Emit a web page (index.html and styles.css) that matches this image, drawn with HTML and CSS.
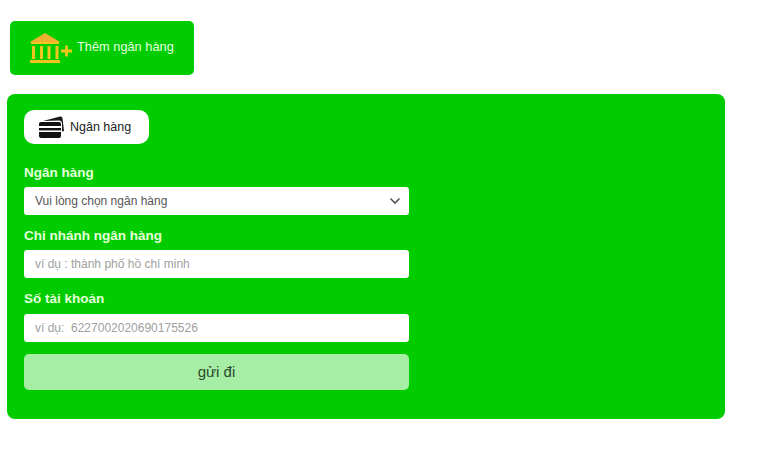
FILE: index.html
```html
<!DOCTYPE html>
<html lang="vi">
<head>
  <meta charset="UTF-8">
  <title>Thêm ngân hàng</title>
  <link rel="stylesheet" href="styles.css">
</head>
<body>
  <div class="add-wrap">
    <a class="add-bank" href="#">
      <svg class="bank-icon" width="43" height="31" viewBox="0 0 43 31">
        <path d="M1 9 L16 0 L31 9 Z" fill="#f0b030"/>
        <rect x="2" y="9" width="28" height="2" fill="#f2c51e"/>
        <rect x="3" y="13" width="3" height="13" fill="#f2c51e"/>
        <rect x="11" y="13" width="3" height="13" fill="#f2c51e"/>
        <rect x="18.500" y="13" width="3" height="13" fill="#f2c51e"/>
        <rect x="26.500" y="13" width="3" height="13" fill="#f2c51e"/>
        <rect x="1" y="27" width="30" height="3" fill="#f2c51e"/>
        <path d="M32 18 H43 M37.500 12.500 V23.500" stroke="#f2c51e" stroke-width="2.800" fill="none"/>
      </svg>
      <span>Thêm ngân hàng</span>
    </a>
  </div>

  <div class="panel">
    <div class="tab">
      <svg class="card-icon" width="26" height="23" viewBox="0 0 26 23">
        <path d="M4 5 L21 0.500 Q23 0 23.500 2 L25 15 L23 15.500 V8 Q23 4.500 20 4.500 Z" fill="#1a1a1a"/>
        <path d="M2 6 H20 Q22 6 22 8 V10 H0 V8 Q0 6 2 6 Z" fill="#111"/>
        <rect x="0" y="12" width="22" height="2.400" fill="#111"/>
        <path d="M0 16 H22 V20 Q22 22 20 22 H2 Q0 22 0 20 Z" fill="#111"/>
      </svg>
      <span>Ngân hàng</span>
    </div>

    <form class="bank-form">
      <label class="field-label">Ngân hàng</label>
      <div class="select-box">
        <span>Vui lòng chọn ngân hàng</span>
        <svg width="12" height="8" viewBox="0 0 12 8"><path d="M1.500 1.500 L6 6 L10.500 1.500" stroke="#555" stroke-width="1.600" fill="none"/></svg>
      </div>

      <label class="field-label">Chi nhánh ngân hàng</label>
      <input class="text-input" type="text" placeholder="ví dụ : thành phố hồ chí minh">

      <label class="field-label field-label-tall">Số tài khoản</label>
      <input class="text-input" type="text" placeholder="ví dụ:  6227002020690175526">

      <button class="submit" type="button">gửi đi</button>
    </form>
  </div>
</body>
</html>
```

FILE: styles.css
```css
body {
  margin: 0;
  background-color: #fff;
  font-family: "Liberation Sans", Arial, sans-serif;
  color: #222;
}
.add-wrap {
  padding: 21px 0 19px 10px;
}
.add-bank {
  display: flex;
  align-items: center;
  gap: 5px;
  width: 184px;
  height: 54px;
  box-sizing: border-box;
  padding-left: 19px;
  background-color: #00cc00;
  border-radius: 5px;
  color: #e6ffe0;
  font-size: 12.8px;
  text-decoration: none;
}
.add-bank span {
  margin-bottom: 3px;
}
.panel {
  width: 718px;
  height: 325px;
  box-sizing: border-box;
  margin-left: 7px;
  padding: 16px 17px;
  background-color: #00cc00;
  border-radius: 8px;
}
.tab {
  display: flex;
  align-items: center;
  gap: 5px;
  width: 125px;
  height: 34px;
  box-sizing: border-box;
  padding-left: 15px;
  background-color: #fff;
  border-radius: 10px;
  font-size: 12.5px;
}
.bank-form {
  width: 385px;
  margin-top: 20px;
}
.field-label {
  display: block;
  height: 23px;
  line-height: 17px;
  color: #e4ffdc;
  font-size: 13.5px;
  font-weight: bold;
}
.field-label-tall {
  height: 24px;
}
.select-box, .text-input {
  display: flex;
  align-items: center;
  width: 100%;
  height: 28px;
  box-sizing: border-box;
  margin-bottom: 12px;
  padding: 0 11px;
  background-color: #fff;
  border: 0;
  border-radius: 3px;
  font-family: inherit;
  font-size: 12px;
}
.select-box {
  justify-content: space-between;
  padding-right: 8px;
  color: #555;
}
.text-input::placeholder {
  color: #a0a0a0;
}
.submit {
  display: block;
  width: 100%;
  height: 36px;
  padding: 0 0 2px;
  background-color: #a6eda6;
  border: 0;
  border-radius: 5px;
  color: #2a4a2a;
  font-family: inherit;
  font-size: 15px;
}
```
